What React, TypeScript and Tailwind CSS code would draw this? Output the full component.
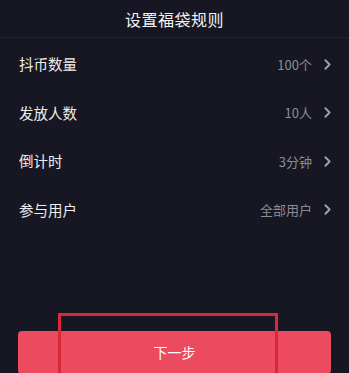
import { ChevronRight } from 'lucide-react';

const rows = [
  { label: '抖币数量', value: '100个' },
  { label: '发放人数', value: '10人' },
  { label: '倒计时', value: '3分钟' },
  { label: '参与用户', value: '全部用户' },
];

export default function App() {
  return (
    <div
      className="relative w-[349px] h-[373px] overflow-hidden bg-[#161722] flex flex-col"
      style={{ fontFamily: '"Noto Sans CJK SC", "Noto Sans", sans-serif' }}
    >
      {/* Header */}
      <div className="h-[38px] shrink-0 flex items-center justify-center border-b border-[#22232e]">
        <h1 className="text-[16px] leading-none text-[#f2f2f2] tracking-[0.5px]">设置福袋规则</h1>
      </div>

      {/* Rule rows */}
      <div className="flex flex-col mt-[2px]">
        {rows.map((row) => (
          <div key={row.label} className="h-[48.5px] flex items-center justify-between pl-[19px] pr-[13px]">
            <span className="text-[14.5px] text-[#ededed]">{row.label}</span>
            <div className="flex items-center gap-[7px]">
              <span className="text-[13px] text-[#8c8d94]">{row.value}</span>
              <ChevronRight size={17} strokeWidth={2.6} className="text-[#a3a4ab]" />
            </div>
          </div>
        ))}
      </div>

      {/* Next button */}
      <div className="flex-1" />
      <div className="px-[18px] mb-[-1px]">
        <button
          type="button"
          className="w-full h-[43px] rounded-[4px] bg-[#ec4a5e] text-white text-[14px] flex items-center justify-center"
        >
          下一步
        </button>
      </div>

      {/* Annotation box */}
      <div className="absolute left-[58px] top-[313px] w-[220px] h-[80px] border-[3px] border-[#d9283a] pointer-events-none" />
    </div>
  );
}
